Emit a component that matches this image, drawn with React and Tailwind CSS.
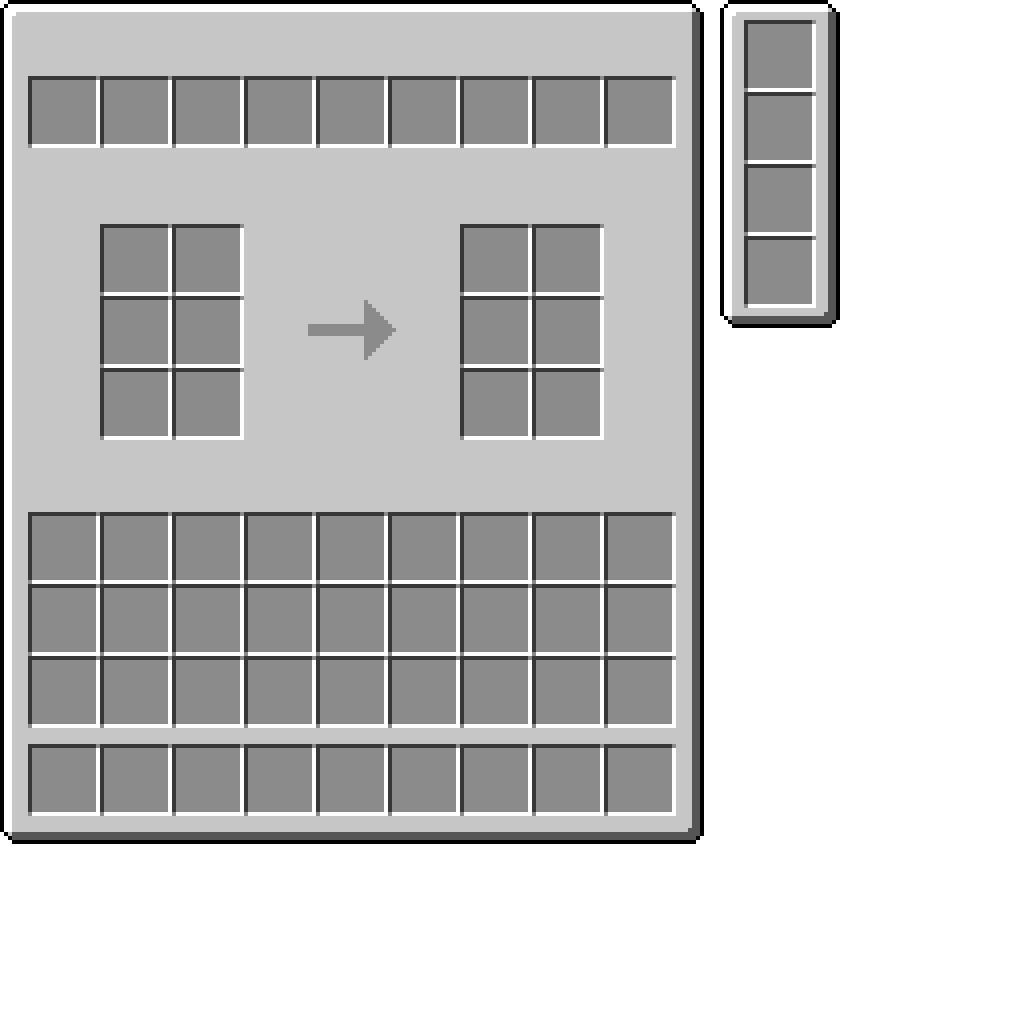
import React from 'react'

// stepped pixel corners, 1 texel = 4px
const outerClip =
	'[clip-path:polygon(8px_0,calc(100%_-_12px)_0,calc(100%_-_12px)_4px,calc(100%_-_8px)_4px,calc(100%_-_8px)_8px,calc(100%_-_4px)_8px,calc(100%_-_4px)_12px,100%_12px,100%_calc(100%_-_8px),calc(100%_-_4px)_calc(100%_-_8px),calc(100%_-_4px)_calc(100%_-_4px),calc(100%_-_8px)_calc(100%_-_4px),calc(100%_-_8px)_100%,12px_100%,12px_calc(100%_-_4px),8px_calc(100%_-_4px),8px_calc(100%_-_8px),4px_calc(100%_-_8px),4px_calc(100%_-_12px),0_calc(100%_-_12px),0_8px,4px_8px,4px_4px,8px_4px)]'

const innerClip =
	'[clip-path:polygon(4px_0,calc(100%_-_8px)_0,calc(100%_-_8px)_4px,calc(100%_-_4px)_4px,calc(100%_-_4px)_8px,100%_8px,100%_calc(100%_-_4px),calc(100%_-_4px)_calc(100%_-_4px),calc(100%_-_4px)_100%,8px_100%,8px_calc(100%_-_4px),4px_calc(100%_-_4px),4px_calc(100%_-_8px),0_calc(100%_-_8px),0_4px,4px_4px)]'

function Panel({ className, innerClassName, children }) {
	return (
		<div className={`bg-black p-1 ${outerClip} ${className}`}>
			<div
				className={`relative h-full w-full bg-[#c6c6c6] shadow-[inset_8px_8px_0_#ffffff,inset_-8px_-8px_0_#555555] ${innerClip} ${innerClassName}`}
			>
				<div className="absolute left-2 top-2 size-1 bg-white" />
				<div className="absolute right-1 top-1 size-1 bg-[#c6c6c6]" />
				<div className="absolute bottom-1 left-1 size-1 bg-[#c6c6c6]" />
				<div className="absolute bottom-2 right-2 size-1 bg-[#555555]" />
				{children}
			</div>
		</div>
	)
}

const Slot = () => (
	<div className="relative h-[72px] w-[72px] bg-[#8b8b8b] shadow-[inset_4px_4px_0_#373737,inset_-4px_-4px_0_#ffffff] before:absolute before:right-0 before:top-0 before:size-1 before:bg-[#8b8b8b] after:absolute after:bottom-0 after:left-0 after:size-1 after:bg-[#8b8b8b]" />
)

const colClass = {
	1: 'grid-cols-[72px]',
	2: 'grid-cols-[repeat(2,72px)]',
	9: 'grid-cols-[repeat(9,72px)]',
}

const Slots = ({ count, cols }) => (
	<div className={`grid w-fit ${colClass[cols]}`}>
		{Array.from({ length: count }).map((_, i) => <Slot key={i} />)}
	</div>
)

const Arrow = () => (
	<svg width="88" height="60" viewBox="0 0 88 60" shapeRendering="crispEdges" className="mt-[76px] ml-16 block shrink-0">
		<path
			fill="#8b8b8b"
			d="M0 24H56V0H60V4H64V8H68V12H72V16H76V20H80V24H84V28H88V32H84V36H80V40H76V44H72V48H68V52H64V56H60V60H56V36H0Z"
		/>
	</svg>
)

export default function App() {
	return (
		<div className="flex items-start gap-4">
			<Panel className="h-[844px] w-[704px] shrink-0" innerClassName="pl-6 pt-[72px]">
				<Slots count={9} cols={9} />

				<div className="mt-[76px] flex items-start">
					<div className="ml-[72px]">
						<Slots count={6} cols={2} />
					</div>
					<Arrow />
					<div className="ml-16">
						<Slots count={6} cols={2} />
					</div>
				</div>

				<div className="mt-[72px]">
					<Slots count={27} cols={9} />
				</div>
				<div className="mt-4">
					<Slots count={9} cols={9} />
				</div>
			</Panel>

			<Panel className="h-[328px] w-[120px] shrink-0" innerClassName="pl-5 pt-4">
				<Slots count={4} cols={1} />
			</Panel>
		</div>
	)
}
